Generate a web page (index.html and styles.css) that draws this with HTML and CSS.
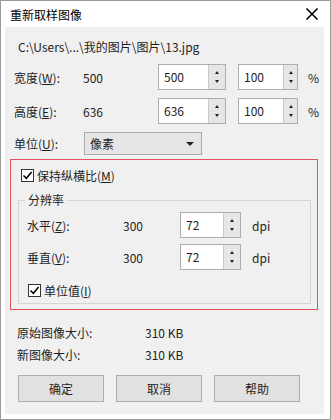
FILE: index.html
```html
<!DOCTYPE html>
<html lang="zh-CN">
<head>
	<meta charset="UTF-8">
	<title>重新取样图像</title>
	<link rel="stylesheet" href="styles.css">
</head>
<body>
	<div class="window">
		<div class="titlebar">
			<span class="title">重新取样图像</span>
			<svg class="close" width="14" height="14" viewBox="0 0 14 14">
				<path d="M1.5 1.5 L12.5 12.5 M12.5 1.5 L1.5 12.5" stroke="#000" stroke-width="1.6"/>
			</svg>
		</div>
		<div class="panel">
			<div class="path">C:\Users\...\我的图片\图片\13.jpg</div>

			<div class="row size-row">
				<span class="label">宽度(<u>W</u>):</span>
				<span class="value">500</span>
				<div class="spin spin-a">
					<span class="spin-text">500</span>
					<span class="spin-btn"><i class="up"></i><i class="down"></i></span>
				</div>
				<div class="spin spin-b">
					<span class="spin-text">100</span>
					<span class="spin-btn"><i class="up"></i><i class="down"></i></span>
				</div>
				<span class="unit">%</span>
			</div>

			<div class="row size-row">
				<span class="label">高度(<u>E</u>):</span>
				<span class="value">636</span>
				<div class="spin spin-a">
					<span class="spin-text">636</span>
					<span class="spin-btn"><i class="up"></i><i class="down"></i></span>
				</div>
				<div class="spin spin-b">
					<span class="spin-text">100</span>
					<span class="spin-btn"><i class="up"></i><i class="down"></i></span>
				</div>
				<span class="unit">%</span>
			</div>

			<div class="row unit-row">
				<span class="label">单位(<u>U</u>):</span>
				<div class="select">
					<span>像素</span>
					<i class="arrow"></i>
				</div>
			</div>

			<div class="redbox">
				<label class="check keep">
					<span class="box"><svg width="11" height="11" viewBox="0 0 11 11"><path d="M1.5 5.5 L4.3 8.3 L9.6 2" fill="none" stroke="#000" stroke-width="1.5"/></svg></span>
					<span>保持纵横比(<u>M</u>)</span>
				</label>

				<div class="group">
					<span class="legend">分辨率</span>
					<div class="row dpi-row first">
						<span class="label">水平(<u>Z</u>):</span>
						<span class="value">300</span>
						<div class="spin spin-c">
							<span class="spin-text">72</span>
							<span class="spin-btn"><i class="up"></i><i class="down"></i></span>
						</div>
						<span class="unit">dpi</span>
					</div>
					<div class="row dpi-row">
						<span class="label">垂直(<u>V</u>):</span>
						<span class="value">300</span>
						<div class="spin spin-c">
							<span class="spin-text">72</span>
							<span class="spin-btn"><i class="up"></i><i class="down"></i></span>
						</div>
						<span class="unit">dpi</span>
					</div>
					<label class="check unitval">
						<span class="box"><svg width="11" height="11" viewBox="0 0 11 11"><path d="M1.5 5.5 L4.3 8.3 L9.6 2" fill="none" stroke="#000" stroke-width="1.5"/></svg></span>
						<span>单位值(<u>I</u>)</span>
					</label>
				</div>
			</div>

			<div class="info first">
				<span class="info-label">原始图像大小:</span>
				<span>310 KB</span>
			</div>
			<div class="info">
				<span class="info-label">新图像大小:</span>
				<span>310 KB</span>
			</div>

			<div class="buttons">
				<span class="btn">确定</span>
				<span class="btn">取消</span>
				<span class="btn">帮助</span>
			</div>
		</div>
	</div>
</body>
</html>
```

FILE: styles.css
```css
*{margin:0;padding:0;box-sizing:border-box;}
body{
	background:#fff;
	font-family:"Noto Sans CJK SC","Noto Sans",sans-serif;
	font-size:12px;
	color:#1e1e1e;
}
u{text-decoration:underline;text-underline-offset:1px;}
.window{
	width:331px;
	height:420px;
	border:1px solid #9a9a9a;
	background:#fff;
}
.titlebar{
	height:26px;
	display:flex;
	align-items:center;
	justify-content:space-between;
	padding:0 11px 0 9px;
}
.title{font-size:12px;color:#000;}
.close{display:block;}
.panel{
	margin:0 6px 0 4px;
	height:387px;
	background:#f0f0f0;
	padding-top:11px;
}
.path{
	height:18px;
	line-height:18px;
	padding-left:13px;
}
.row{
	display:flex;
	align-items:center;
}
.size-row{
	height:26px;
	margin-top:8px;
	padding-left:9px;
}
.size-row .label{width:69px;}
.size-row .value{width:75px;}
.spin{
	display:flex;
	height:26px;
	border:1px solid #adadad;
	background:#fff;
}
.spin-text{
	flex:1;
	line-height:24px;
	padding-left:5px;
}
.spin-btn{
	display:flex;
	flex-direction:column;
	justify-content:space-around;
	align-items:center;
	background:#e6e6e6;
	border-left:1px solid #c8c8c8;
	padding:3px 0;
}
.spin-btn i{
	display:block;
	width:0;
	height:0;
	border-left:2.5px solid transparent;
	border-right:2.5px solid transparent;
}
.spin-btn .up{border-bottom:3px solid #222;}
.spin-btn .down{border-top:3px solid #222;}
.spin-a{width:68px;}
.spin-a .spin-btn{width:17px;}
.spin-b{width:60px;margin-left:12px;}
.spin-b .spin-btn{width:14px;}
.size-row .unit{margin-left:10px;}
.unit-row{
	height:23px;
	margin-top:8px;
	padding-left:9px;
}
.unit-row .label{width:70px;}
.select{
	width:118px;
	height:23px;
	background:#e5e5e5;
	border:1px solid #acacac;
	display:flex;
	align-items:center;
	justify-content:space-between;
	padding:0 7px 0 5px;
}
.arrow{
	display:block;
	width:0;
	height:0;
	border-left:4px solid transparent;
	border-right:4px solid transparent;
	border-top:4px solid #222;
}
.redbox{
	margin:4px 0 0 5px;
	width:308px;
	height:151px;
	border:1px solid #e0525c;
	padding:9px 0 0 10px;
}
.check{
	display:flex;
	align-items:center;
	height:13px;
}
.box{
	width:13px;
	height:13px;
	border:1px solid #333;
	background:#fff;
	display:flex;
	align-items:center;
	justify-content:center;
	margin-right:3px;
}
.box svg{display:block;}
.group{
	position:relative;
	margin:18px 0 0 -3px;
	width:293px;
	height:104px;
	border:1px solid #d5d5d5;
	padding:0 0 0 8px;
}
.legend{
	position:absolute;
	left:6px;
	top:-9px;
	padding:0 3px;
	background:#f0f0f0;
	line-height:16px;
}
.dpi-row{
	height:26px;
	margin-top:6px;
}
.dpi-row.first{margin-top:11px;}
.dpi-row .label{width:96px;}
.dpi-row .value{width:57px;}
.spin-c{width:61px;}
.spin-c .spin-btn{width:17px;}
.dpi-row .unit{margin-left:11px;}
.unitval{margin:14px 0 0 1px;}
.info{
	display:flex;
	height:18px;
	line-height:18px;
	padding-left:12px;
}
.info.first{margin-top:14px;}
.info + .info{margin-top:4px;}
.info-label{width:128px;}
.buttons{
	display:flex;
	gap:12px;
	margin:11px 0 0 13px;
}
.btn{
	width:86px;
	height:27px;
	line-height:25px;
	text-align:center;
	background:#e1e1e1;
	border:1px solid #adadad;
}
```
